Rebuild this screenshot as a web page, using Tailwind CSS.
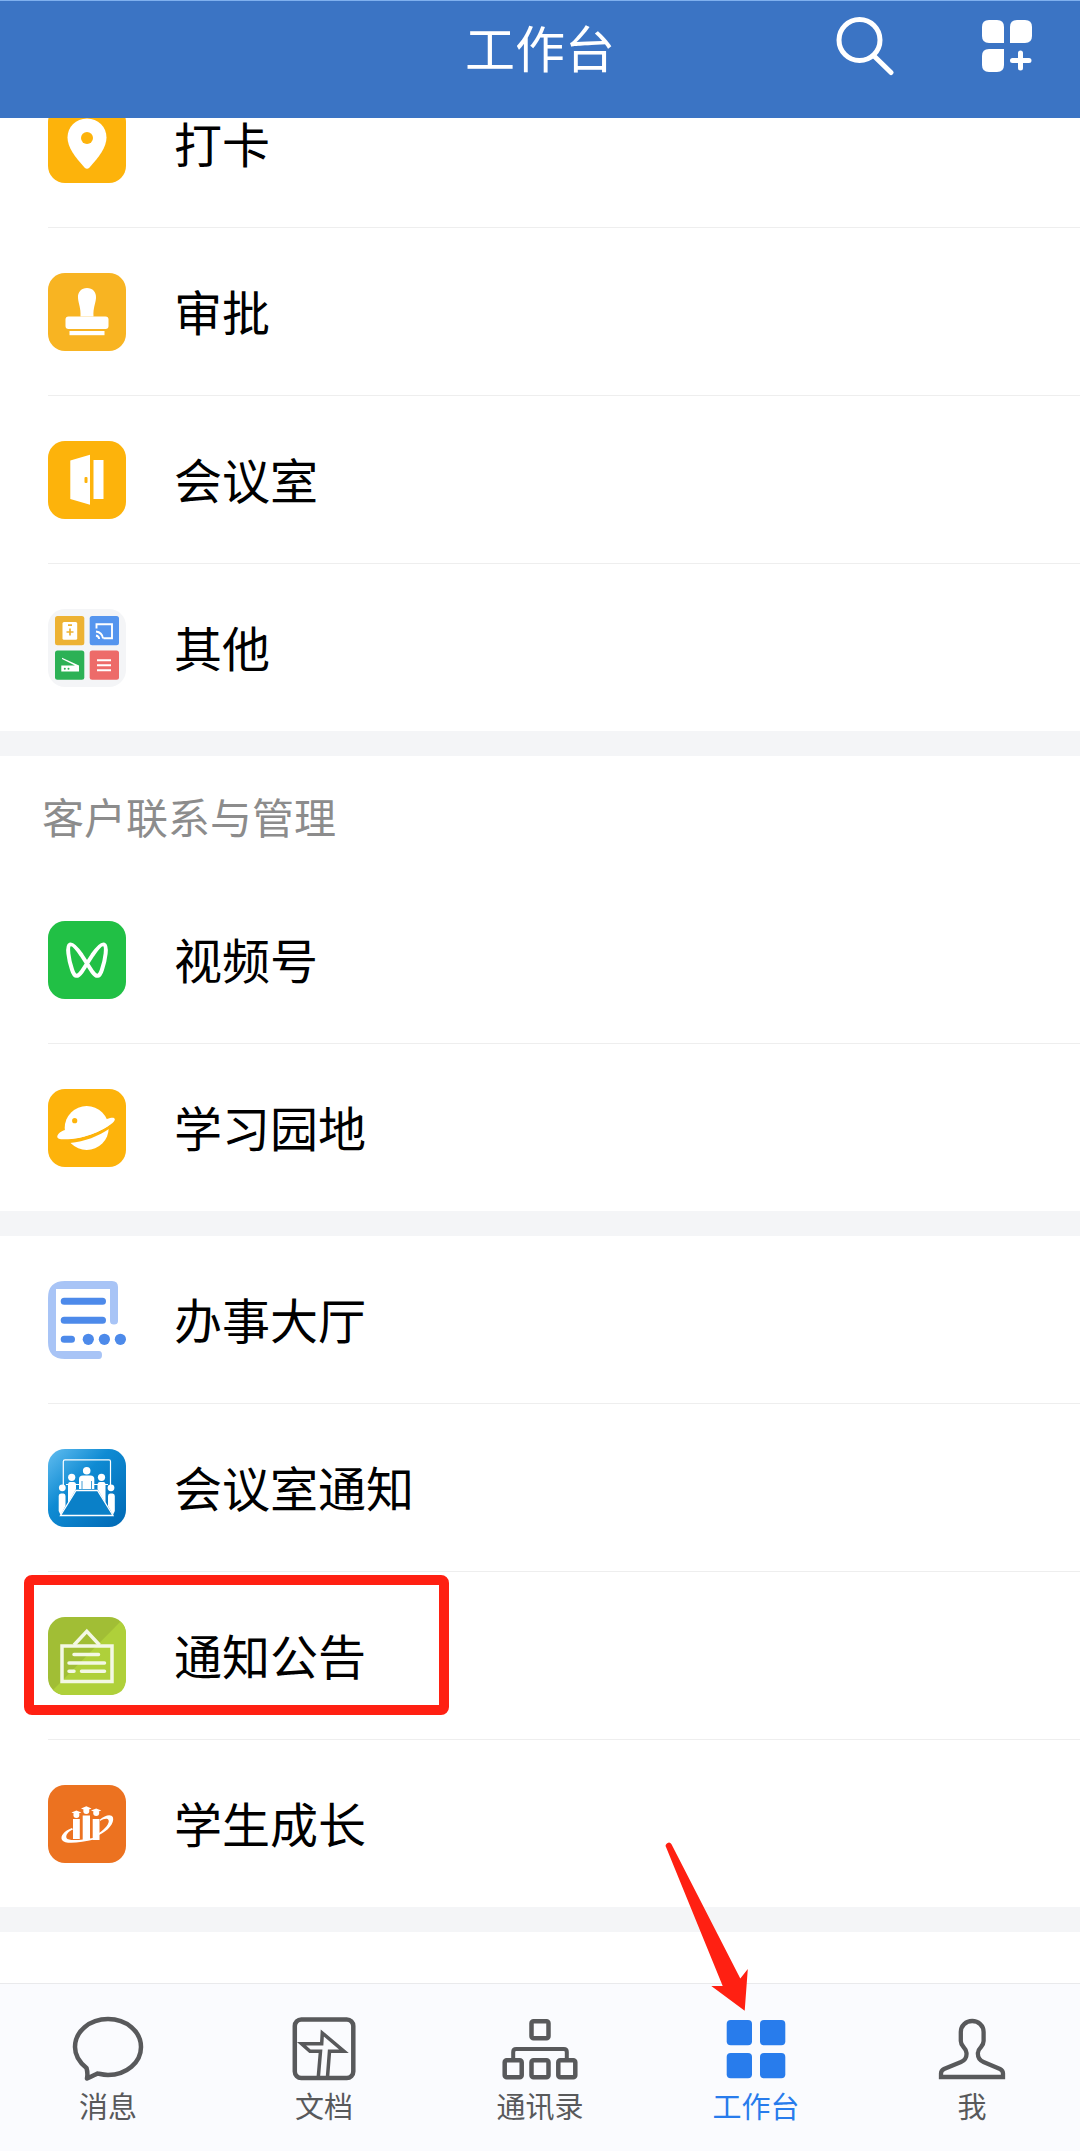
<!DOCTYPE html>
<html lang="zh-CN">
<head>
    <meta charset="UTF-8">
    <meta name="viewport" content="width=device-width, initial-scale=1.0">
    <title>工作台</title>
    <script src="https://cdn.jsdelivr.net/npm/@tailwindcss/browser@4"></script>
</head>
<body class="bg-white text-black font-['Noto_Sans_CJK_SC',sans-serif]">
    <div class="min-h-screen flex flex-col">
        <!-- Header -->
        <header class="relative z-10 h-[118px] pb-7 px-12 grid grid-cols-[1fr_auto_1fr] items-center bg-[#3b74c4] border-t border-[#7fb0ee] text-white">
            <span></span>
            <h1 class="text-[50px] leading-[72px]">工作台</h1>
            <div class="flex items-center justify-end gap-22">
                <button type="button" aria-label="搜索">
                    <svg class="block w-[58px] h-[60px]" viewBox="0 0 58 60" fill="none" stroke="currentColor" stroke-width="5" stroke-linecap="round">
                        <ellipse cx="23.5" cy="24" rx="20.5" ry="20.5"/>
                        <path d="M38 40 55 56.5"/>
                    </svg>
                </button>
                <button type="button" aria-label="添加应用">
                    <svg class="block w-[50px] h-[54px]" viewBox="0 0 50 54" fill="currentColor">
                        <path d="M7 1H15Q22 1 22 8V24H7Q0 24 0 17V8Q0 1 7 1ZM35 1H43Q50 1 50 8V17Q50 24 43 24H28V8Q28 1 35 1ZM7 30H22V46Q22 53 15 53H7Q0 53 0 46V37Q0 30 7 30Z"/>
                        <path d="M38.500 34V49M30.500 41.500H47" fill="none" stroke="currentColor" stroke-width="5" stroke-linecap="round"/>
                    </svg>
                </button>
            </div>
        </header>

        <!-- App list, scrolled partly under the header -->
        <main class="flex-1 overflow-hidden bg-white">
            <ul class="-mt-[58px] pl-12">
                <li class="h-[168px] border-b border-[#eeeeee]">
                    <a href="#" class="h-full flex items-center gap-12">
                        <svg class="size-[78px] shrink-0" viewBox="0 0 78 78">
                            <rect width="78" height="78" rx="17" fill="#fdb30b"/>
                            <path d="M39 13.500C28 13.500 19.500 22 19.500 32.500C19.500 42 27 52 36.500 62.500Q39 65 41.500 62.500C51 52 58.500 42 58.500 32.500C58.500 22 50 13.500 39 13.500Z" fill="#fff"/>
                            <circle cx="39" cy="33" r="6" fill="#fdb30b"/>
                        </svg>
                        <span class="pb-1 text-5xl leading-12">打卡</span>
                    </a>
                </li>
                <li class="h-[168px] border-b border-[#eeeeee]">
                    <a href="#" class="h-full flex items-center gap-12">
                        <svg class="size-[78px] shrink-0" viewBox="0 0 78 78">
                            <rect width="78" height="78" rx="17" fill="#f8b422"/>
                            <g fill="#fff">
                                <path d="M39 15C33.500 15 29.500 19 30 25C30.500 31 33 35 32.500 43.500H45.500C45 35 47.500 31 48 25C48.500 19 44.500 15 39 15Z"/>
                                <rect x="17.500" y="43.500" width="43" height="12.500" rx="3"/>
                                <rect x="21.500" y="58" width="35" height="4.200"/>
                            </g>
                        </svg>
                        <span class="pb-1 text-5xl leading-12">审批</span>
                    </a>
                </li>
                <li class="h-[168px] border-b border-[#eeeeee]">
                    <a href="#" class="h-full flex items-center gap-12">
                        <svg class="size-[78px] shrink-0" viewBox="0 0 78 78">
                            <rect width="78" height="78" rx="17" fill="#fdb30b"/>
                            <path d="M22.300 19.500 42 13.800V63.700L22.300 58ZM45.500 19H55.500V58H45.500Z" fill="#fff"/>
                            <rect x="36.500" y="36" width="3" height="6" rx="1" fill="#fdb30b"/>
                        </svg>
                        <span class="pb-1 text-5xl leading-12">会议室</span>
                    </a>
                </li>
                <li class="h-[167px]">
                    <a href="#" class="h-full flex items-center gap-12">
                        <svg class="size-[78px] shrink-0" viewBox="0 0 78 78">
                            <rect width="78" height="78" rx="17" fill="#f4f5f7"/>
                            <rect x="7" y="7" width="29.300" height="29.300" rx="2.500" fill="#edb233"/>
                            <rect x="41.700" y="7" width="29.300" height="29.300" rx="2.500" fill="#5595ee"/>
                            <rect x="7" y="41.500" width="29.300" height="29.300" rx="2.500" fill="#2cb155"/>
                            <rect x="41.700" y="41.500" width="29.300" height="29.300" rx="2.500" fill="#ed6b69"/>
                            <rect x="14.500" y="13" width="14.700" height="17.700" rx="1.500" fill="#fff"/>
                            <path d="M22 19.500V26.500M18.500 23H25.500M20 16.200H24" stroke="#edb233" stroke-width="1.700"/>
                            <path d="M48.500 19.500V15.200H64V29.300H55.500M48 22.500C52 23 54.500 25.500 55 29.500M48 26.500C50 27 51 28 51.200 30" fill="none" stroke="#fff" stroke-width="1.900"/>
                            <path d="M14 48.700 31 56.500V62.500H13.300V56.500H27L14 50Z" fill="#fff"/>
                            <circle cx="16.800" cy="59.800" r="1" fill="#2cb155"/>
                            <circle cx="20.500" cy="59.800" r="1" fill="#2cb155"/>
                            <path d="M49 51.200H63M49 56.200H63M49 61.200H63" stroke="#fff" stroke-width="2"/>
                        </svg>
                        <span class="pb-1 text-5xl leading-12">其他</span>
                    </a>
                </li>
            </ul>

            <div class="h-[25px] bg-[#f4f5f7]"></div>

            <h2 class="h-[120px] px-[42px] flex items-center text-[42px] leading-[60px] text-[#8c8c8c]">客户联系与管理</h2>
            <ul class="pl-12">
                <li class="h-[168px] border-b border-[#eeeeee]">
                    <a href="#" class="h-full flex items-center gap-12">
                        <svg class="size-[78px] shrink-0" viewBox="0 0 78 78">
                            <rect width="78" height="78" rx="17" fill="#21c045"/>
                            <path d="M33.500 34C28 26 24.500 22.500 22 23.500C18.500 25 20.500 38 24 48.500C26.500 56.500 29.500 56.500 33.500 51L44.500 34C50 26 53.500 22.500 56 23.500C59.500 25 57.500 38 54 48.500C51.500 56.500 48.500 56.500 44.500 51Z" fill="none" stroke="#fff" stroke-width="4"/>
                        </svg>
                        <span class="pb-1 text-5xl leading-12">视频号</span>
                    </a>
                </li>
                <li class="h-[167px]">
                    <a href="#" class="h-full flex items-center gap-12">
                        <svg class="size-[78px] shrink-0" viewBox="0 0 78 78">
                            <rect width="78" height="78" rx="17" fill="#fdb30b"/>
                            <circle cx="38.700" cy="39" r="22" fill="#fff"/>
                            <path d="M12 50C33 51 51 44 64 34L62.500 39C50 47.500 37 52.500 22 54Z" fill="#fdb30b"/>
                            <path d="M16.500 41C9 44 6.500 49.500 13 50.200C32 51.500 54 42.500 64.500 34C69 30 67 27 59 30L50 38L22 45Z" fill="#fff"/>
                            <circle cx="26.700" cy="31.700" r="2.600" fill="#fdb30b"/>
                        </svg>
                        <span class="pb-1 text-5xl leading-12">学习园地</span>
                    </a>
                </li>
            </ul>

            <div class="h-[25px] bg-[#f4f5f7]"></div>

            <ul class="pl-12">
                <li class="h-[168px] border-b border-[#eeeeee]">
                    <a href="#" class="h-full flex items-center gap-12">
                        <svg class="size-[78px] shrink-0" viewBox="0 0 78 78">
                            <path d="M17 0H64Q70 0 70 6V40Q70 43.500 66 43.500Q62 43.500 62 40V8H8V70H51Q54 70 54 74Q54 78 51 78H17Q0 78 0 61V17Q0 0 17 0Z" fill="#a8c4f6"/>
                            <path d="M16.200 20.300H54.500M16.200 39.200H54.500M16.200 58.200H23.500" stroke="#4d8aea" stroke-width="7" stroke-linecap="round"/>
                            <g fill="#4d8aea">
                                <circle cx="40.300" cy="58.300" r="5.600"/>
                                <circle cx="56.400" cy="58.300" r="5.600"/>
                                <circle cx="72.400" cy="58.300" r="5.600"/>
                            </g>
                        </svg>
                        <span class="pb-1 text-5xl leading-12">办事大厅</span>
                    </a>
                </li>
                <li class="h-[168px] border-b border-[#eeeeee]">
                    <a href="#" class="h-full flex items-center gap-12">
                        <svg class="size-[78px] shrink-0" viewBox="0 0 78 78">
                            <defs>
                                <linearGradient id="meetingBg" x1="0" y1="0" x2="1" y2="1">
                                    <stop offset="0" stop-color="#62bdf0"/>
                                    <stop offset="0.400" stop-color="#0f8bd3"/>
                                    <stop offset="1" stop-color="#0068b4"/>
                                </linearGradient>
                            </defs>
                            <rect width="78" height="78" rx="17" fill="url(#meetingBg)"/>
                            <path d="M15.300 36V12.500Q15.300 10.800 17 10.800H61Q62.500 10.800 62.500 12.500V36M18 35.500H60" fill="none" stroke="#fff" stroke-width="1.200"/>
                            <g fill="#fff">
                                <circle cx="38.700" cy="21.700" r="3.800"/>
                                <circle cx="23.700" cy="28.300" r="3.600"/>
                                <circle cx="53.500" cy="28.300" r="3.600"/>
                                <circle cx="14.300" cy="38.800" r="3.400"/>
                                <circle cx="63" cy="38.800" r="3.400"/>
                                <path d="M35 26.500H42.500Q46.300 26.500 46.300 30V40H31V30Q31 26.500 35 26.500Z"/>
                                <path d="M22 33H25.500Q28 33 28 36V40L20 54V36Q20 33 22 33Z"/>
                                <path d="M55.500 33H52Q49.500 33 49.500 36V40L57.500 54V36Q57.500 33 55.500 33Z"/>
                                <path d="M13 44.500H15.500Q17.500 44.500 17.500 47V57L12.500 66L10.700 62V47Q10.700 44.500 13 44.500Z"/>
                                <path d="M64.500 44.500H62Q60 44.500 60 47V57L65 66L66.800 62V47Q66.800 44.500 64.500 44.500Z"/>
                            </g>
                            <path d="M34 32V40M43.500 32V40" stroke="#0f86cc" stroke-width="0.800"/>
                            <path d="M28 41.500H49.500L65 66.500H12.500Z" fill="#0a80c8" stroke="#fff" stroke-width="1.300"/>
                        </svg>
                        <span class="pb-1 text-5xl leading-12">会议室通知</span>
                    </a>
                </li>
                <li class="relative h-[168px] border-b border-[#eeeeee]">
                    <a href="#" class="h-full flex items-center gap-12">
                        <svg class="size-[78px] shrink-0" viewBox="0 0 78 78">
                            <rect width="78" height="78" rx="17" fill="#a1be35"/>
                            <path d="M72.500 4.500Q78 9 78 17V61Q78 78 61 78H17Q10 78 5 73Z" fill="#afd03a"/>
                            <g fill="none" stroke="#f3f8e4" stroke-width="3.500">
                                <rect x="14" y="29" width="50" height="35.500"/>
                                <path d="M26 28 38.800 14.300 51.500 28"/>
                                <path d="M26 37.500H50.500M21 46H56.500M21 54.300H26M33.500 54.300H56.500" stroke-linecap="round"/>
                            </g>
                        </svg>
                        <span class="pb-1 text-5xl leading-12">通知公告</span>
                    </a>
                    <!-- Highlight frame -->
                    <div class="absolute -left-6 top-[3px] w-[425px] h-[140px] border-10 border-[#ff2012] rounded-lg pointer-events-none"></div>
                </li>
                <li class="h-[167px]">
                    <a href="#" class="h-full flex items-center gap-12">
                        <svg class="size-[78px] shrink-0" viewBox="0 0 78 78">
                            <rect width="78" height="78" rx="17" fill="#ec7220"/>
                            <g fill="#fff">
                                <path d="M25 34H31.800V54H25ZM34.700 30.500H42V55H34.700ZM44.700 34H51.500V55H44.700Z"/>
                                <circle cx="28.400" cy="30" r="3"/>
                                <circle cx="38.300" cy="26" r="3"/>
                                <circle cx="48.200" cy="28" r="3"/>
                                <path d="M23.500 27.500 28.400 25.500 33.300 27.500 28.400 29.500ZM33 23.500 38.300 21.300 43.500 23.500 38.300 25.700ZM43 25.500 48.200 23.500 53.300 25.500 48.200 27.500Z"/>
                                <path d="M24 43C16 46 12 51 14 55C17 60 33 57.500 46 54.500L45 53C34 55 20 56.500 18.500 53C17.500 50 20 46.500 25 44.500Z"/>
                                <path d="M52 34.500C57 30 63.500 28.500 65 32.500C66.500 38 60 46 51 50V48C57 44 62 38 60.500 35C59.500 33 56 33.500 52 36Z"/>
                            </g>
                        </svg>
                        <span class="pb-1 text-5xl leading-12">学生成长</span>
                    </a>
                </li>
            </ul>

            <div class="h-[25px] bg-[#f4f5f7]"></div>
        </main>

        <!-- Bottom tabs -->
        <nav class="h-[168px] pt-8 grid grid-cols-5 border-t border-[#e9eaec] bg-[#fafbfe] text-[29px] leading-[44px] text-[#58595b]">
            <a href="#" class="flex flex-col items-center gap-px">
                <svg class="w-20 h-[66px]" viewBox="0 0 80 66" fill="none" stroke="currentColor" stroke-width="4.500" stroke-linejoin="round">
                    <path d="M18.500 52C11 46 7 39 7 31C7 15.500 21.500 3 40 3S73 15.500 73 31S58.500 59 40 59C35.500 59 32 58 29.500 57.500Q27.500 58.500 19 62.500Q20 57 18.500 52Z"/>
                </svg>
                <span>消息</span>
            </a>
            <a href="#" class="flex flex-col items-center gap-px">
                <svg class="w-20 h-[66px]" viewBox="0 0 80 66" fill="none" stroke="currentColor" stroke-width="4">
                    <rect x="10.800" y="3.500" width="58.500" height="58.500" rx="6.500" stroke-width="4.500"/>
                    <path d="M34.300 61 36.500 35.300H26L17.500 27.700H37.700L38.300 17 60 35.300H45.500L43.500 61" stroke-width="3.500"/>
                </svg>
                <span>文档</span>
            </a>
            <a href="#" class="flex flex-col items-center gap-px">
                <svg class="w-20 h-[66px]" viewBox="0 0 80 66" fill="none" stroke="currentColor" stroke-width="4.500">
                    <rect x="31.500" y="5.300" width="17" height="17" rx="2"/>
                    <rect x="4.700" y="44.300" width="17" height="17" rx="2"/>
                    <rect x="31.500" y="44.300" width="17" height="17" rx="2"/>
                    <rect x="58.300" y="44.300" width="17" height="17" rx="2"/>
                    <path d="M13.200 43V36Q13.200 33 16.200 33H63.800Q66.800 33 66.800 36V43" stroke-width="4"/>
                </svg>
                <span>通讯录</span>
            </a>
            <a href="#" class="relative flex flex-col items-center gap-px text-[#287cec]" aria-current="page">
                <svg class="w-20 h-[66px]" viewBox="0 0 80 66" fill="currentColor">
                    <rect x="10.700" y="4" width="25.300" height="25.300" rx="4"/>
                    <rect x="44" y="4" width="25.300" height="25.300" rx="4"/>
                    <rect x="10.700" y="37" width="25.300" height="25.300" rx="4"/>
                    <rect x="44" y="37" width="25.300" height="25.300" rx="4"/>
                </svg>
                <span>工作台</span>
                <!-- Pointer arrow -->
                <svg class="absolute left-4 -top-44 w-[86px] h-[172px] pointer-events-none" viewBox="0 0 86 172" fill="#ff2012">
                    <path d="M2.200 7.500A3 3 0 0 1 7.500 4.200L76.300 138.500 83.800 129 80.700 170.800 47.300 146H58.700Z"/>
                </svg>
            </a>
            <a href="#" class="flex flex-col items-center gap-px">
                <svg class="w-20 h-[66px]" viewBox="0 0 80 66" fill="none" stroke="currentColor" stroke-width="4.300">
                    <path d="M9 61V57.500Q9 54.500 12 53L29 46Q35 43.500 34.500 37Q34.300 34 31.500 31Q28.800 28 28.800 25V16C28.800 9.500 34 5 40.200 5S51.600 9.500 51.600 16V25Q51.600 28 49 31Q46 34 45.900 37Q45.500 43.500 51.500 46L68 53Q71 54.500 71 57.500V61Z"/>
                </svg>
                <span>我</span>
            </a>
        </nav>
    </div>
</body>
</html>
